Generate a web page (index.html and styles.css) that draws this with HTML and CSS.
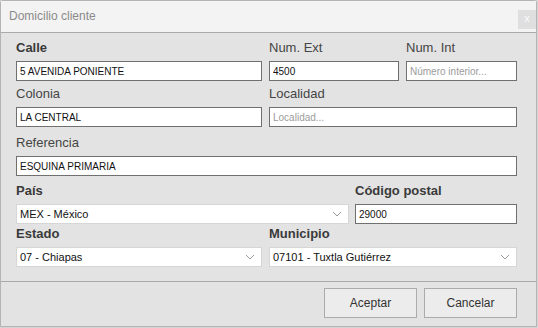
FILE: index.html
```html
<!DOCTYPE html>
<html lang="es">
<head>
  <meta charset="UTF-8" />
  <meta name="viewport" content="width=device-width, initial-scale=1.0" />
  <title>Domicilio cliente</title>
  <link rel="stylesheet" href="styles.css">
</head>
<body>
  <div class="ventana">
    <header class="titulo">
      <span>Domicilio cliente</span>
      <button class="cerrar">x</button>
    </header>

    <main class="contenido">
      <div class="fila fila-calle">
        <div class="campo">
          <label class="fuerte">Calle</label>
          <input type="text" value="5 AVENIDA PONIENTE" />
        </div>
        <div class="campo">
          <label>Num. Ext</label>
          <input type="text" value="4500" />
        </div>
        <div class="campo">
          <label>Num. Int</label>
          <input type="text" placeholder="Número interior..." />
        </div>
      </div>

      <div class="fila fila-dos">
        <div class="campo">
          <label>Colonia</label>
          <input type="text" value="LA CENTRAL" />
        </div>
        <div class="campo">
          <label>Localidad</label>
          <input type="text" placeholder="Localidad..." />
        </div>
      </div>

      <div class="fila separada">
        <div class="campo">
          <label>Referencia</label>
          <input type="text" value="ESQUINA PRIMARIA" />
        </div>
      </div>

      <div class="fila fila-pais">
        <div class="campo">
          <label class="fuerte">País</label>
          <div class="selector">
            <span>MEX - México</span>
            <svg width="10" height="6" viewBox="0 0 10 6"><polyline points="1,1 5,5 9,1" fill="none" stroke="#9a9a9a" stroke-width="1"/></svg>
          </div>
        </div>
        <div class="campo">
          <label class="fuerte">Código postal</label>
          <input type="text" value="29000" />
        </div>
      </div>

      <div class="fila fila-dos pegada">
        <div class="campo">
          <label class="fuerte">Estado</label>
          <div class="selector">
            <span>07 - Chiapas</span>
            <svg width="10" height="6" viewBox="0 0 10 6"><polyline points="1,1 5,5 9,1" fill="none" stroke="#9a9a9a" stroke-width="1"/></svg>
          </div>
        </div>
        <div class="campo">
          <label class="fuerte">Municipio</label>
          <div class="selector">
            <span>07101 - Tuxtla Gutiérrez</span>
            <svg width="10" height="6" viewBox="0 0 10 6"><polyline points="1,1 5,5 9,1" fill="none" stroke="#9a9a9a" stroke-width="1"/></svg>
          </div>
        </div>
      </div>
    </main>

    <footer class="pie">
      <button class="boton">Aceptar</button>
      <button class="boton">Cancelar</button>
    </footer>
  </div>
</body>
</html>
```

FILE: styles.css
```css
body {
  margin: 0;
  padding: 0;
  background-color: #d4d4d4;
  font-family: "Liberation Sans", Arial, sans-serif;
}

.ventana {
  width: 537px;
  height: 327px;
  box-sizing: border-box;
  border: 1px solid #b4b4b4;
  border-radius: 3px 3px 0 0;
  background-color: #e3e3e3;
  display: flex;
  flex-direction: column;
}

.titulo {
  height: 31px;
  background-color: #f3f3f3;
  border-bottom: 1px solid #aaaaaa;
  display: flex;
  align-items: center;
  justify-content: space-between;
  padding-left: 8px;
  font-size: 12px;
  color: #8a8a8a;
}

.titulo span {
  padding-bottom: 1px;
}

.cerrar {
  width: 18px;
  height: 19px;
  margin-top: 5px;
  padding: 0 0 2px 0;
  border: none;
  background-color: #dfdfdf;
  color: #fafafa;
  font-family: "Liberation Sans", Arial, sans-serif;
  font-size: 11px;
}

.contenido {
  flex: 1;
  padding: 5px 19px 0 15px;
  display: flex;
  flex-direction: column;
  gap: 3px;
}

.fila {
  display: grid;
  grid-template-columns: minmax(0, 1fr);
  column-gap: 7px;
}

.fila-calle {
  grid-template-columns: 246px 130px minmax(0, 1fr);
}

.fila-dos {
  grid-template-columns: 246px minmax(0, 1fr);
}

.fila-pais {
  grid-template-columns: 333px minmax(0, 1fr);
  column-gap: 6px;
  margin-top: 2px;
}

.separada {
  margin-top: 3px;
}

.pegada {
  margin-top: -3px;
}

.campo {
  display: flex;
  flex-direction: column;
  gap: 3px;
  min-width: 0;
}

.campo label {
  height: 20px;
  line-height: 20px;
  font-size: 13px;
  color: #454545;
}

.campo label.fuerte {
  font-weight: bold;
  color: #3a3a3a;
}

.campo input {
  width: 100%;
  min-width: 0;
  height: 20px;
  box-sizing: border-box;
  margin: 0;
  border: 1px solid #707070;
  background-color: #fff;
  padding: 0 3px;
  font-family: "Liberation Sans", Arial, sans-serif;
  font-size: 10px;
  color: #111;
  outline: none;
}

.campo input::placeholder {
  color: #9c9c9c;
}

.selector {
  height: 20px;
  box-sizing: border-box;
  border: 1px solid #d6d6d6;
  background-color: #fff;
  display: flex;
  align-items: center;
  justify-content: space-between;
  padding: 0 6px 0 3px;
  font-size: 11px;
  color: #111;
}

.pie {
  height: 38px;
  border-top: 1px solid #aaaaaa;
  display: flex;
  justify-content: flex-end;
  align-items: flex-start;
  gap: 7px;
  padding: 6px 19px 0 0;
}

.boton {
  width: 93px;
  height: 30px;
  border: 1px solid #ababab;
  background-color: #ececec;
  color: #333;
  font-family: "Liberation Sans", Arial, sans-serif;
  font-size: 12px;
  padding: 0;
}
```
